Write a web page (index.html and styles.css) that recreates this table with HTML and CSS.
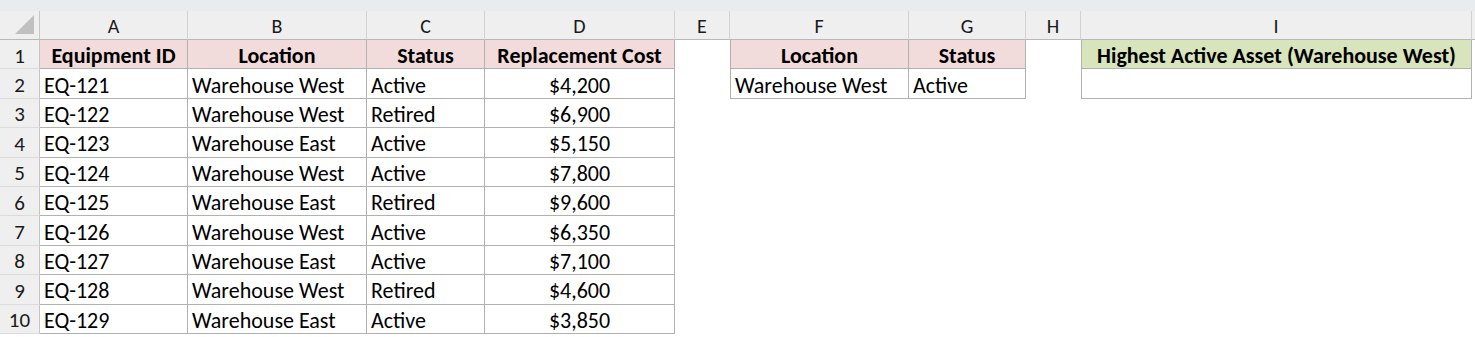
FILE: index.html
```html
<!DOCTYPE html>
<html>
<head>
<meta charset="utf-8">
<link rel="stylesheet" href="styles.css">
</head>
<body>
<div class="sheet">
  <div class="band"></div>

  <div class="ch corner"><span class="tri"></span></div>
  <div class="ch">A</div><div class="ch">B</div><div class="ch">C</div><div class="ch">D</div>
  <div class="ch">E</div><div class="ch">F</div><div class="ch">G</div><div class="ch">H</div>
  <div class="ch">I</div><div class="ch rest"></div>

  <div class="rh">1</div>
  <div class="c t hd">Equipment ID</div><div class="c t hd">Location</div><div class="c t hd">Status</div><div class="c t hd">Replacement Cost</div>
  <div class="c"></div>
  <div class="c t hd fl">Location</div><div class="c t hd">Status</div>
  <div class="c"></div>
  <div class="c t hd2 fl">Highest Active Asset (Warehouse West)</div><div class="c"></div>

  <div class="rh">2</div>
  <div class="c t">EQ-121</div><div class="c t">Warehouse West</div><div class="c t">Active</div><div class="c t num">$4,200</div>
  <div class="c"></div>
  <div class="c t fl">Warehouse West</div><div class="c t">Active</div>
  <div class="c"></div>
  <div class="c t fl"></div><div class="c"></div>

  <div class="rh">3</div>
  <div class="c t">EQ-122</div><div class="c t">Warehouse West</div><div class="c t">Retired</div><div class="c t num">$6,900</div>
  <div class="c span6"></div>

  <div class="rh">4</div>
  <div class="c t">EQ-123</div><div class="c t">Warehouse East</div><div class="c t">Active</div><div class="c t num">$5,150</div>
  <div class="c span6"></div>

  <div class="rh">5</div>
  <div class="c t">EQ-124</div><div class="c t">Warehouse West</div><div class="c t">Active</div><div class="c t num">$7,800</div>
  <div class="c span6"></div>

  <div class="rh">6</div>
  <div class="c t">EQ-125</div><div class="c t">Warehouse East</div><div class="c t">Retired</div><div class="c t num">$9,600</div>
  <div class="c span6"></div>

  <div class="rh">7</div>
  <div class="c t">EQ-126</div><div class="c t">Warehouse West</div><div class="c t">Active</div><div class="c t num">$6,350</div>
  <div class="c span6"></div>

  <div class="rh">8</div>
  <div class="c t">EQ-127</div><div class="c t">Warehouse East</div><div class="c t">Active</div><div class="c t num">$7,100</div>
  <div class="c span6"></div>

  <div class="rh">9</div>
  <div class="c t">EQ-128</div><div class="c t">Warehouse West</div><div class="c t">Retired</div><div class="c t num">$4,600</div>
  <div class="c span6"></div>

  <div class="rh">10</div>
  <div class="c t">EQ-129</div><div class="c t">Warehouse East</div><div class="c t">Active</div><div class="c t num">$3,850</div>
  <div class="c span6"></div>
</div>
</body>
</html>
```

FILE: styles.css
```css
* { box-sizing: border-box; }
html, body { margin: 0; padding: 0; background: #ffffff; }
body {
  font-family: Carlito, Lato, "Liberation Sans", sans-serif;
  color: #000000;
  width: 1475px;
  height: 337px;
  overflow: hidden;
}
.sheet {
  display: grid;
  grid-template-columns: 40px 148px 179px 118px 190px 55px 179px 117px 55px 391px 3px;
  grid-template-rows: 11px 29px repeat(10, 29.4px);
}
.band {
  grid-column: 1 / -1;
  background: #e8ecef;
}
.ch {
  background: #efefef;
  border-right: 1px solid #d2d2d2;
  border-bottom: 1px solid #b8b8b8;
  display: flex;
  align-items: center;
  justify-content: center;
  font-size: 20px;
  color: #1a1a1a;
  padding-top: 1px;
}
.corner {
  position: relative;
  border-right: 1px solid #c6c6c6;
}
.tri {
  position: absolute;
  right: 5px;
  bottom: 5px;
  width: 0;
  height: 0;
  border-left: 19px solid transparent;
  border-bottom: 19px solid #c0c0c0;
}
.rest { border-right: none; }
.rh {
  background: #efefef;
  border-right: 1px solid #c6c6c6;
  border-bottom: 1px solid #dcdcdc;
  display: flex;
  align-items: center;
  justify-content: center;
  font-size: 21px;
  color: #1a1a1a;
  padding-top: 3px;
}
.c {
  display: flex;
  align-items: center;
  font-size: 22px;
  white-space: nowrap;
  overflow: hidden;
  padding: 3px 0 0 4px;
}
.t {
  border-right: 1px solid #b1b1b1;
  border-bottom: 1px solid #b1b1b1;
}
.fl { border-left: 1px solid #b1b1b1; }
.hd {
  background: #f2dcdb;
  font-weight: bold;
  justify-content: center;
  padding-left: 0;
}
.hd2 {
  background: #d8e4bc;
  font-weight: bold;
  justify-content: center;
  padding-left: 0;
}
.num { justify-content: center; padding-left: 0; }
.span6 { grid-column: span 6; }
```
